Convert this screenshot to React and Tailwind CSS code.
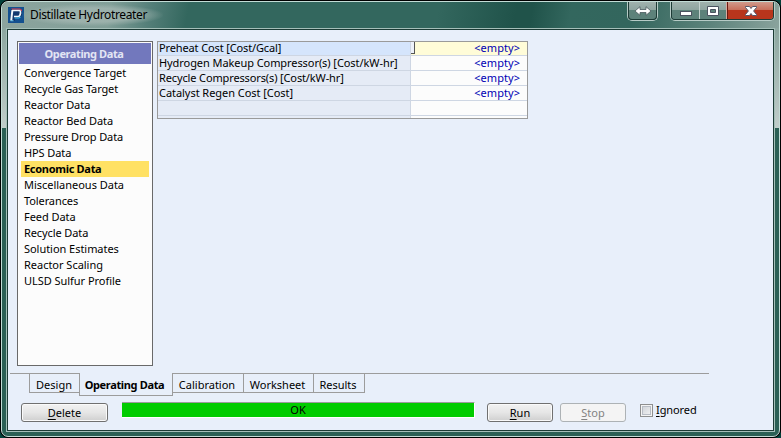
import React from "react";

const navItems = [
  ["Convergence Target", "tracking-[-0.08px]"],
  ["Recycle Gas Target", "tracking-[-0.12px]"],
  ["Reactor Data", "tracking-[-0.05px]"],
  ["Reactor Bed Data", "tracking-[-0.05px]"],
  ["Pressure Drop Data", "tracking-[-0.1px]"],
  ["HPS Data", "tracking-[-0.1px]"],
  ["Economic Data", "tracking-[-0.3px]"],
  ["Miscellaneous Data", "tracking-[-0.02px]"],
  ["Tolerances", "tracking-[-0.1px]"],
  ["Feed Data", "tracking-[-0.05px]"],
  ["Recycle Data", "tracking-[-0.1px]"],
  ["Solution Estimates", "tracking-[-0.04px]"],
  ["Reactor Scaling", "tracking-[-0.02px]"],
  ["ULSD Sulfur Profile", "tracking-[-0.04px]"],
];

const costRows = [
  ["Preheat Cost [Cost/Gcal]", "tracking-[-0.13px]"],
  ["Hydrogen Makeup Compressor(s) [Cost/kW-hr]", "tracking-[-0.07px]"],
  ["Recycle Compressors(s) [Cost/kW-hr]", "tracking-[-0.13px]"],
  ["Catalyst Regen Cost [Cost]", "tracking-[-0.05px]"],
];

const tabs = [
  ["Design", "w-[50px]"],
  ["Operating Data", "w-[94px]"],
  ["Calibration", "w-[71px]"],
  ["Worksheet", "w-[70px]"],
  ["Results", "w-[51px]"],
];

function AppIcon() {
  return (
    <svg width="16" height="16" viewBox="0 0 16 16" className="shrink-0">
      <rect width="16" height="16" fill="#14508f" />
      <path d="M3 2h9l2 2v4l-2 3H7v3H2z" fill="#12386e" />
      <path d="M3.500 2h8.300q1.700.5 1.700 2" fill="none" stroke="#e23a4e" strokeWidth="1.2" />
      <path d="M4 3.500h7.500q1.300.3 1 2.500l-.5 2q-.4 1.500-2 1.500H6" fill="none" stroke="#f4f7fb" strokeWidth="1.7" />
      <path d="M4.400 3L3.200 13.500" fill="none" stroke="#f4f7fb" strokeWidth="2" />
      <path d="M6.500 11h4.300l1.700-1" fill="none" stroke="#45bce8" strokeWidth="1.2" />
      <path d="M2.500 13.700h3" stroke="#6fc8ec" />
    </svg>
  );
}

const glass = "bg-linear-to-b from-[#a0b1ad] via-[#8fa5a0] via-45% to-[#5d827a] to-50%";

function TitleButtons() {
  return (
    <div className="flex h-[19px]">
      <div className="mr-3 flex w-[31px] rounded-b-[5px] border border-t-0 border-[#b6cbc6]">
        <div className={"flex flex-1 items-center justify-center rounded-b-[4px] border border-t-0 border-[#1d3b36] " + glass}>
          <svg width="18" height="10" viewBox="0 0 18 10" className="shrink-0">
            <path d="M1 5L6 .7v2.800h6V.7L17 5l-5 4.300V6.500H6v2.800z" fill="#fff" stroke="#4b5b5e" strokeWidth=".8" />
          </svg>
        </div>
      </div>
      <div className="flex w-[105px] rounded-b-[5px] border border-t-0 border-[#b6cbc6]">
        <div className="flex flex-1 overflow-hidden rounded-b-[4px] border border-t-0 border-[#1d3b36]">
          <div className={"flex w-[28px] items-center justify-center border-r border-[#c3d1ce] " + glass}>
            <svg width="12" height="12" viewBox="0 0 12 12"><rect x=".5" y="6.5" width="11" height="4" fill="#fff" stroke="#4b5360" /></svg>
          </div>
          <div className={"flex w-[27px] items-center justify-center border-r border-[#d9aaa0] " + glass}>
            <svg width="12" height="10" viewBox="0 0 12 10"><path d="M.5.5h11v9H.5zM3.500 3.500v3h5v-3z" fill="#fff" fillRule="evenodd" stroke="#4b5360" /></svg>
          </div>
          <div className="flex flex-1 items-center justify-center border-l border-[#6b1a10] bg-linear-to-b from-[#d09a8c] via-[#c8705c] via-45% to-[#b8351c] to-50%">
            <svg width="12" height="10" viewBox="0 0 12 10"><path d="M.5.5h4L6 2.500 7.500.5h4v1L8.600 5l2.900 3.500v1h-4L6 7.500l-1.500 2h-4v-1L3.400 5 .5 1.500z" fill="#fff" stroke="#555668" /></svg>
          </div>
        </div>
      </div>
    </div>
  );
}

function NavPanel() {
  return (
    <div className="h-[325px] w-[136px] border border-[#696969] bg-[#fcfcfc] p-px">
      <div className="h-[21px] bg-[#7278bd] pr-[2px] text-center leading-[22px] font-bold tracking-[-0.4px] text-[#e3e5f4]">Operating Data</div>
      <div className="mt-px px-[2px]">
        {navItems.map(([name, track]) => (
          <div
            key={name}
            className={"h-4 pl-[3px] leading-4 whitespace-nowrap " + track + (name === "Economic Data" ? " bg-[#ffe164] font-bold" : "")}
          >
            {name}
          </div>
        ))}
      </div>
    </div>
  );
}

function CostTable() {
  return (
    <div className="h-[78px] w-[371px] overflow-hidden border border-[#9a9a9a] bg-[#fcfcfc]">
      {costRows.map(([name, track], i) => (
        <div key={name} className={"flex border-b border-[#ced6e3] " + (i === 0 ? "h-[14px] leading-[12px]" : "h-[15px] leading-[14px]")}>
          <div className={"w-[253px] border-r border-[#ced6e3] pl-px whitespace-nowrap " + track + (i === 0 ? " bg-[#d5e5fc]" : " bg-[#e5ebf6]")}>{name}</div>
          <div className={"flex flex-1 justify-between pr-[7px] tracking-[0.05px] text-[#0000b4] " + (i === 0 ? "bg-[#fffcd8]" : "")}>
            <span className={i === 0 ? "h-[12px] w-[4px] border-r border-b border-[#555] bg-[#eef2fa]" : ""} />
            <span>&lt;empty&gt;</span>
          </div>
        </div>
      ))}
      <div className="h-[15px] border-b border-[#ced6e3]"><div className="h-full w-[253px] border-r border-[#ced6e3] bg-[#e5ebf6]" /></div>
      <div className="h-[2px] w-[253px] border-r border-[#ced6e3] bg-[#e5ebf6]" />
    </div>
  );
}

function TabStrip() {
  return (
    <div className="ml-[2px] flex h-[23px] w-[699px] items-start">
      <div className="w-[19px] border-t border-[#9c9c9c]" />
      {tabs.map(([name, width], i) => (
        <div
          key={name}
          className={
            "text-center whitespace-nowrap border-b border-[#9c9c9c] " + width +
            (i === 1 ? " h-[23px] border-x pt-px pr-[3px] leading-[21px] font-bold tracking-[-0.35px]" : " h-5 border-t leading-[21px]") +
            (i === 0 ? " border-l pr-px" : i > 1 ? " border-r pr-[2px]" : "")
          }
        >
          {name}
        </div>
      ))}
      <div className="flex-1 border-t border-[#9c9c9c]" />
    </div>
  );
}

function ActionButton({ letter, rest, className }) {
  return (
    <button className={"h-[19px] rounded-[3px] border text-center leading-[18px] " + className}>
      <span className="underline underline-offset-2">{letter}</span>{rest}
    </button>
  );
}

const enabled = "border-[#707070] bg-linear-to-b from-[#f2f2f2] from-0% via-[#e6e6e6] via-50% to-[#cfcfcf] shadow-[inset_0_0_0_1px_#fafafa]";

export default function App() {
  return (
    <div className="h-[438px] w-[781px] overflow-hidden bg-[#04403a] font-['Noto_Sans',sans-serif] text-[11px] text-black">
      <div className="h-full rounded-[8px] border border-black bg-black">
        <div className="flex h-full flex-col overflow-hidden rounded-[7px] border border-[#c3dcd6] bg-linear-to-b from-[#7f9c95] via-[#c0cdca] via-[126px] to-[#2b6055] to-[126px]">
          <div className="flex h-[26px] shrink-0 justify-between bg-[linear-gradient(100deg,#8ca49e_0%,#819f98_14%,#55807a_19%,#33675e_24%,#33675e_56%,#20534a_66%,#20534a_68%,#33675e_73%,#33665d_81%,#5c837b_91%,#8aa39d_100%)] pr-[4px] pl-[6px]">
            <div className="flex h-[25px] items-center">
              <AppIcon />
              <div className="-ml-[2px] bg-[radial-gradient(ellipse_at_center,#a7b9b4b0_45%,transparent_72%)] pr-4 pl-2 text-[12px] leading-[22px] tracking-[-0.35px] whitespace-nowrap">Distillate Hydrotreater</div>
            </div>
            <TitleButtons />
          </div>
          <div className="mx-1 h-[404px] border border-[#a5bfb9]">
            <div className="h-full border border-[#1c3b35] bg-[#e8effa]">
              <div className="flex gap-1 pt-[11px] pl-[9px]">
                <NavPanel />
                <CostTable />
              </div>
              <div className="mt-[7px]"><TabStrip /></div>
              <div className="mt-[6px] flex items-start">
                <ActionButton letter="D" rest="elete" className={"mt-px ml-[13px] w-[87px] " + enabled} />
                <div className="ml-[14px] h-[16px] w-[353px] border-t border-r border-b border-t-[#9c9c9c] border-r-white border-b-white bg-[#00cc00] text-center leading-[14px]">OK</div>
                <ActionButton letter="R" rest="un" className={"mt-px ml-3 w-[66px] " + enabled} />
                <ActionButton letter="S" rest="top" className="mt-px ml-[7px] w-[66px] border-[#adb2b5] bg-[#f4f4f4] text-[#838383]" />
                <div className="mt-px ml-[14px] flex items-center gap-[3px]">
                  <span className="h-[13px] w-[13px] border border-[#8e8f8f] bg-linear-to-br from-[#cbcfd5] to-[#f6f6f6] shadow-[inset_0_0_0_1px_#f4f4f4,inset_0_0_0_2px_#b8bdc5]" />
                  <span className="leading-[14px] tracking-[-0.1px]"><span className="underline underline-offset-2">I</span>gnored</span>
                </div>
              </div>
            </div>
          </div>
        </div>
      </div>
    </div>
  );
}
